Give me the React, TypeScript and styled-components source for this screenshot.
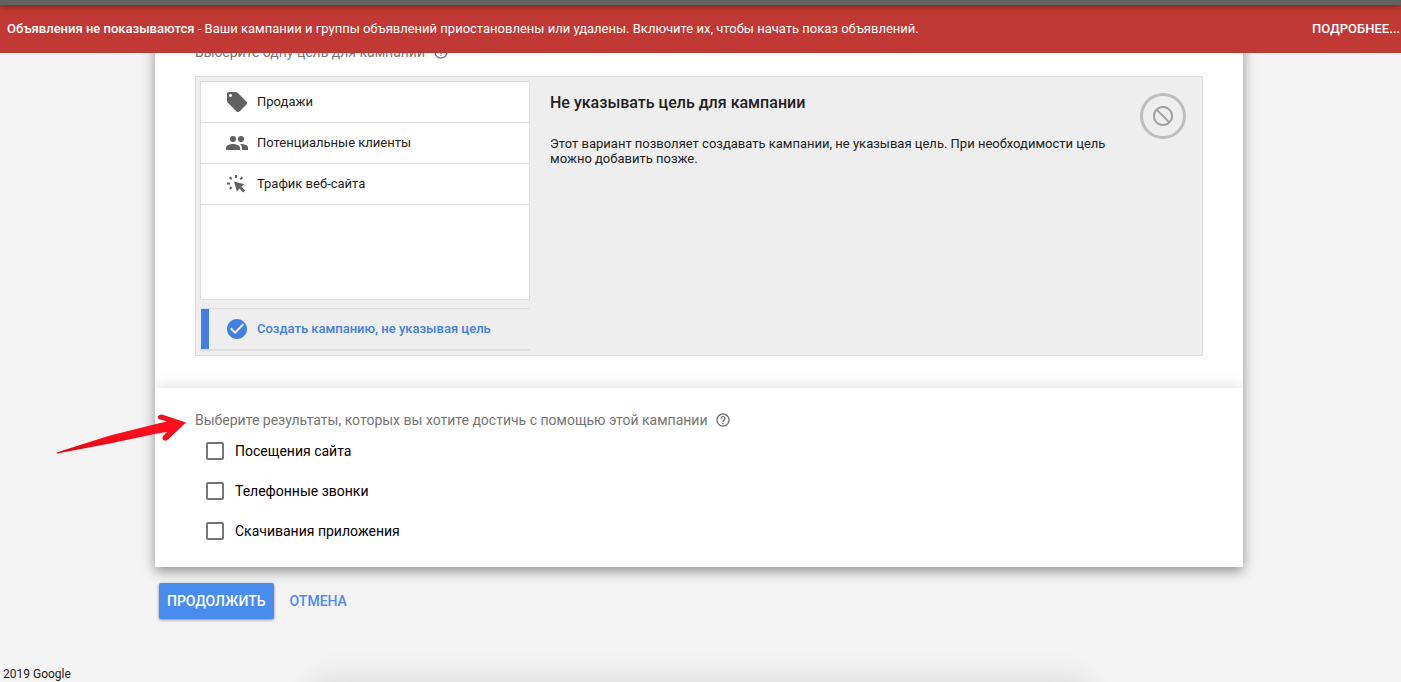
import React from "react";
import styled, { createGlobalStyle } from "styled-components";
import { MdBlock, MdCheckCircle, MdHelpOutline, MdLocalOffer } from "react-icons/md";

const GlobalStyle = createGlobalStyle`
  *, *::before, *::after { box-sizing: border-box; }
  body {
    margin: 0;
    background: #f4f4f4;
    color: #212121;
    font-family: Roboto, "Liberation Sans", sans-serif;
    font-size: 13px;
  }
  button { font: inherit; cursor: pointer; }
`;

const Page = styled.div`
  position: relative;
  display: flex;
  flex-direction: column;
  min-height: 100vh;
  overflow: hidden;
`;

const TopBar = styled.div`
  position: relative;
  z-index: 3;
  height: 5px;
  background: #616161;
  box-shadow: 0 1px 6px rgba(0, 0, 0, 0.5);
`;

const Banner = styled.div`
  position: relative;
  z-index: 2;
  display: flex;
  align-items: center;
  justify-content: space-between;
  gap: 16px;
  min-height: 48px;
  padding: 0 1px 2px 7px;
  background: #c13934;
  color: #fff;
`;

const BannerText = styled.p`
  margin: 0;
  strong { font-weight: 500; }
`;

const BannerLink = styled.a`
  color: #fff;
  font-weight: 500;
  text-decoration: none;
  white-space: nowrap;
`;

const Main = styled.main`
  flex: 1;
  margin: -12px 158px 0 155px;
`;

const Card = styled.div`
  background: #fff;
  box-shadow: 0 4px 12px rgba(0, 0, 0, 0.42);
`;

const GoalSection = styled.section`
  padding: 0 40px 32px;
`;

const OutcomeHost = styled.div`
  position: relative;
`;

const OutcomeSection = styled.section`
  padding: 21px 40px 16px;
  background: #fff;
  box-shadow: 0 -1px 16px rgba(0, 0, 0, 0.14);
  clip-path: inset(-20px 0 0 0);
`;

const SectionTitle = styled.h2`
  display: flex;
  align-items: center;
  gap: 8px;
  margin: 0;
  color: #757575;
  font-size: 14px;
  font-weight: 400;
  line-height: 22px;
`;

const Panel = styled.div`
  display: flex;
  margin-top: 13px;
  padding: 4px;
  border: 1px solid #dedede;
  background: #eee;
`;

const GoalColumn = styled.div`
  flex: 0 0 330px;
  display: flex;
  flex-direction: column;
  gap: 8px;
`;

const GoalList = styled.div`
  min-height: 219px;
  border: 1px solid #dedede;
  background: #fff;
`;

const GoalLabel = styled.span`
  padding-bottom: 2px;
`;

const GoalRow = styled.button<{ $selected?: boolean }>`
  display: flex;
  align-items: center;
  gap: 8px;
  width: 100%;
  height: 41px;
  padding: 0 0 0 24px;
  border: 0 solid #dedede;
  border-bottom-width: 1px;
  background: transparent;
  color: #212121;
  text-align: left;
  svg { flex: none; color: #616161; }

  ${(p) =>
    p.$selected &&
    `
    height: 43px;
    padding-left: 1px;
    border-width: 1px 0 2px;
    color: #427fe1;
    font-weight: 500;
    svg { color: #427fe1; }
    &::before {
      content: "";
      align-self: stretch;
      width: 8px;
      margin-right: 8px;
      background: #427fe1;
    }
  `}
`;

const Detail = styled.div`
  flex: 1;
  display: flex;
  align-items: flex-start;
  justify-content: space-between;
  gap: 16px;
  padding: 12px 12px 0 20px;
`;

const DetailBody = styled.div`
  max-width: 574px;
  h3 {
    margin: 0 0 24px;
    font-size: 16px;
    font-weight: 500;
    line-height: 19px;
  }
  p {
    margin: 0;
    line-height: 15px;
  }
`;

const RoundIcon = styled.div`
  flex: none;
  display: grid;
  place-items: center;
  width: 46px;
  height: 46px;
  border: 3px solid #bdbdbd;
  border-radius: 50%;
  color: #9e9e9e;
  svg { transform: scaleX(-1); }
`;

const Pointer = styled.svg`
  position: absolute;
  top: 22px;
  left: -100px;
  width: 132px;
  height: 48px;
`;

const OptionList = styled.div`
  display: flex;
  flex-direction: column;
`;

const Option = styled.label`
  display: flex;
  align-items: center;
  gap: 11px;
  height: 40px;
  padding-left: 11px;
  color: #000;
  font-size: 14px;
`;

const Tick = styled.input`
  appearance: none;
  width: 18px;
  height: 18px;
  margin: 0;
  border: 2px solid #757575;
  border-radius: 2px;
  background: #fff;
  &:checked { background: #427fe1; }
`;

const Actions = styled.div`
  display: flex;
  gap: 8px;
  padding: 16px 4px;
`;

const Action = styled.button<{ $primary?: boolean }>`
  height: 36px;
  padding: 0 8px;
  border: 0;
  border-radius: 2px;
  background: ${(p) => (p.$primary ? "#4a8cee" : "transparent")};
  color: ${(p) => (p.$primary ? "#fff" : "#4a8cee")};
  font-size: 14px;
  font-weight: 500;
  box-shadow: ${(p) => (p.$primary ? "0 1px 3px rgba(0, 0, 0, 0.45)" : "none")};
`;

const Footer = styled.footer`
  padding: 0 3px 1px;
  font-size: 12px;
  line-height: 14px;
`;

const BottomShade = styled.div`
  position: absolute;
  bottom: -40px;
  left: 312px;
  right: 312px;
  height: 40px;
  box-shadow: 0 0 32px rgba(0, 0, 0, 0.13);
  pointer-events: none;
`;

const PeopleIcon = () => (
  <svg width="24" height="24" viewBox="0 0 24 24" fill="currentColor" aria-hidden="true">
    <circle cx="8" cy="8" r="3" />
    <circle cx="16" cy="8" r="3" />
    <path d="M8 13c-2.330 0-7 1.170-7 3.500V19h14v-2.500C15 14.170 10.330 13 8 13Z" />
    <path d="M16 13c-.29 0-.62.02-.97.05C16.190 13.890 17 15.020 17 16.500V19h6v-2.500C23 14.170 18.330 13 16 13Z" />
  </svg>
);

const ClickIcon = () => (
  <svg width="24" height="24" viewBox="0 0 24 24" fill="currentColor" aria-hidden="true">
    <path d="M9 9.500 19.300 12.300 16.200 14.500 20.200 18.500 18.300 20.400 14.300 16.400 12 19.800Z" />
    <path
      d="M11 3v3M2 11.500h3M4.700 5.200l2 2M17.300 5.200l-2 2M6.700 15l-2 2"
      stroke="currentColor"
      strokeWidth="2"
      fill="none"
    />
  </svg>
);

const PointerArrow = () => (
  <Pointer viewBox="0 0 132 48" aria-hidden="true">
    <defs>
      <linearGradient id="pointerFill" x1="0" y1="0" x2="0.2" y2="1">
        <stop offset="0.2" stopColor="#e81420" />
        <stop offset="0.5" stopColor="#ff0f1c" />
        <stop offset="1" stopColor="#d90916" />
      </linearGradient>
    </defs>
    <path
      d="M1.500 42.500 L55 25.500 103 13.500 112 11.500 105 9.500 C101 8.500 103 4 107 4.500 L131 12.500 113 29.500 C110 32.500 105 29 109 25 L112 22 102 23.500 55 33.500 2 43.500Z"
      fill="url(#pointerFill)"
    />
  </Pointer>
);

const goals = [
  { label: "Продажи", icon: <MdLocalOffer size={24} /> },
  { label: "Потенциальные клиенты", icon: <PeopleIcon /> },
  { label: "Трафик веб-сайта", icon: <ClickIcon /> },
];

const outcomes = ["Посещения сайта", "Телефонные звонки", "Скачивания приложения"];

export default function App() {
  return (
    <Page>
      <GlobalStyle />
      <TopBar />
      <Banner role="alert">
        <BannerText>
          <strong>Объявления не показываются</strong> - Ваши кампании и группы объявлений
          приостановлены или удалены. Включите их, чтобы начать показ объявлений.
        </BannerText>
        <BannerLink href="#details">ПОДРОБНЕЕ...</BannerLink>
      </Banner>
      <Main>
        <Card>
          <GoalSection>
            <SectionTitle>
              Выберите одну цель для кампании
              <MdHelpOutline size={16} />
            </SectionTitle>
            <Panel>
              <GoalColumn>
                <GoalList>
                  {goals.map((goal) => (
                    <GoalRow key={goal.label} type="button">
                      {goal.icon}
                      <GoalLabel>{goal.label}</GoalLabel>
                    </GoalRow>
                  ))}
                </GoalList>
                <GoalRow type="button" $selected aria-pressed="true">
                  <MdCheckCircle size={24} />
                  <GoalLabel>Создать кампанию, не указывая цель</GoalLabel>
                </GoalRow>
              </GoalColumn>
              <Detail>
                <DetailBody>
                  <h3>Не указывать цель для кампании</h3>
                  <p>
                    Этот вариант позволяет создавать кампании, не указывая цель. При
                    необходимости цель можно добавить позже.
                  </p>
                </DetailBody>
                <RoundIcon>
                  <MdBlock size={24} />
                </RoundIcon>
              </Detail>
            </Panel>
          </GoalSection>
          <OutcomeHost>
            <OutcomeSection>
              <SectionTitle>
                Выберите результаты, которых вы хотите достичь с помощью этой кампании
                <MdHelpOutline size={16} />
              </SectionTitle>
              <OptionList>
                {outcomes.map((label) => (
                  <Option key={label}>
                    <Tick type="checkbox" />
                    {label}
                  </Option>
                ))}
              </OptionList>
            </OutcomeSection>
            <PointerArrow />
          </OutcomeHost>
        </Card>
        <Actions>
          <Action type="button" $primary>
            ПРОДОЛЖИТЬ
          </Action>
          <Action type="button">ОТМЕНА</Action>
        </Actions>
      </Main>
      <Footer>2019 Google</Footer>
      <BottomShade />
    </Page>
  );
}
